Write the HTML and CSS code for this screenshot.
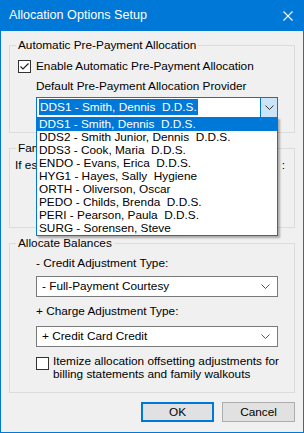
FILE: index.html
```html
<!DOCTYPE html>
<html>
<head>
<meta charset="utf-8">
<link rel="stylesheet" href="styles.css">
</head>
<body>
<div class="window">
  <div class="titlebar">
    <span class="title">Allocation Options Setup</span>
    <svg class="close" width="10" height="10" viewBox="0 0 10 10"><path d="M0.5 0.5 L9.5 9.5 M9.5 0.5 L0.5 9.5" stroke="#fff" stroke-width="1.1" fill="none"/></svg>
  </div>
  <div class="client">
    <fieldset class="group g1">
      <legend>Automatic Pre-Payment Allocation</legend>
      <div class="check-row first">
        <span class="checkbox"><svg width="11" height="11" viewBox="0 0 11 11"><path d="M1.5 5.5 L4 8 L9.5 2.5" stroke="#222" stroke-width="1.2" fill="none"/></svg></span>
        <span class="check-text">Enable Automatic Pre-Payment Allocation</span>
      </div>
      <div class="field-label lbl1">Default Pre-Payment Allocation Provider</div>
      <div class="combo focused c1">
        <span class="combo-text"><span class="sel">DDS1 - Smith, Dennis  D.D.S.</span></span>
        <span class="combo-btn"><svg width="9" height="5" viewBox="0 0 9 5"><path d="M0.5 0.5 L4.5 4.5 L8.5 0.5" stroke="#333" fill="none"/></svg></span>
      </div>
    </fieldset>

    <fieldset class="group g2">
      <legend>Family</legend>
      <div class="split-row">
        <span>If estimated</span>
        <span>:</span>
      </div>
    </fieldset>

    <fieldset class="group g3">
      <legend>Allocate Balances</legend>
      <div class="field-label lbl2">- Credit Adjustment Type:</div>
      <div class="combo c2">
        <span class="combo-text">- Full-Payment Courtesy</span>
        <span class="combo-arrow"><svg width="9" height="5" viewBox="0 0 9 5"><path d="M0.5 0.5 L4.5 4.5 L8.5 0.5" stroke="#555" fill="none"/></svg></span>
      </div>
      <div class="field-label lbl3">+ Charge Adjustment Type:</div>
      <div class="combo c3">
        <span class="combo-text">+ Credit Card Credit</span>
        <span class="combo-arrow"><svg width="9" height="5" viewBox="0 0 9 5"><path d="M0.5 0.5 L4.5 4.5 L8.5 0.5" stroke="#555" fill="none"/></svg></span>
      </div>
      <div class="check-row itemize">
        <span class="checkbox"></span>
        <span class="check-text">Itemize allocation offsetting adjustments for<br>billing statements and family walkouts</span>
      </div>
    </fieldset>

    <div class="buttons">
      <div class="btn default">OK</div>
      <div class="btn">Cancel</div>
    </div>
  </div>

  <ul class="dropdown">
    <li class="hl">DDS1 - Smith, Dennis  D.D.S.</li>
    <li>DDS2 - Smith Junior, Dennis  D.D.S.</li>
    <li>DDS3 - Cook, Maria  D.D.S.</li>
    <li>ENDO - Evans, Erica  D.D.S.</li>
    <li>HYG1 - Hayes, Sally  Hygiene</li>
    <li>ORTH - Oliverson, Oscar</li>
    <li>PEDO - Childs, Brenda  D.D.S.</li>
    <li>PERI - Pearson, Paula  D.D.S.</li>
    <li>SURG - Sorensen, Steve</li>
  </ul>
</div>
</body>
</html>
```

FILE: styles.css
```css
* { box-sizing: border-box; }
html, body { margin: 0; padding: 0; }
body {
  font-family: "Liberation Sans", Arial, sans-serif;
  font-size: 11.8px;
  line-height: 13px;
  color: #000;
  background: #f0f0f0;
}
.window {
  position: relative;
  width: 304px;
  height: 433px;
  border: 1px solid #0078d7;
  border-top: 0;
  background: #f0f0f0;
  display: flex;
  flex-direction: column;
}
.titlebar {
  height: 31px;
  margin: 0 -1px;
  background: #0078d7;
  display: flex;
  align-items: center;
  justify-content: space-between;
  padding: 0 11px 0 9px;
  color: #fff;
}
.title {
  font-size: 12.6px;
  line-height: 16px;
  padding-bottom: 1px;
}
.close { display: block; }
.client {
  flex: 1;
  padding: 8px 8px 0 8px;
  display: flex;
  flex-direction: column;
}
.group {
  margin: 0;
  padding: 0 0 0 6px;
  border: 1px solid #dcdcdc;
  min-width: 0;
}
.group legend {
  padding: 0 2px;
  line-height: 13px;
}
.g1 { height: 94px; }
.g2 { height: 86px; margin-top: 9px; }
.g3 { height: 156px; margin-top: 9px; }

.check-row {
  display: flex;
  align-items: flex-start;
}
.check-row.first { margin-top: 8px; margin-left: 2px; }
.checkbox {
  width: 13px;
  height: 13px;
  border: 1px solid #333;
  background: #fff;
  display: flex;
  align-items: center;
  justify-content: center;
  flex: none;
}
.check-text { margin-left: 5px; }

.field-label { margin-left: 20px; }
.lbl1 { margin-top: 7px; }
.lbl2 { margin-top: 7px; }
.lbl3 { margin-top: 8px; }

.combo {
  margin-left: 20px;
  width: 242px;
  height: 21px;
  border: 1px solid #7a7a7a;
  background: #fff;
  display: flex;
  align-items: center;
  white-space: pre;
}
.combo-text { flex: 1; padding-left: 5px; }
.c1 { margin-top: 4px; border-color: #0078d7; }
.c1 .combo-text { padding-left: 2px; }
.c2 { margin-top: 6px; }
.c3 { margin-top: 8px; }
.sel {
  background: #0078d7;
  color: #fff;
  padding: 1px 1px;
}
.combo-btn {
  width: 17px;
  height: 19px;
  background: #cce4f7;
  border-left: 1px solid #0078d7;
  display: flex;
  align-items: center;
  justify-content: center;
}
.combo-btn svg, .combo-arrow svg { display: block; }
.combo-arrow {
  width: 20px;
  display: flex;
  justify-content: center;
  padding-right: 3px;
}

.split-row {
  margin-top: 4px;
  margin-left: -1px;
  display: flex;
  justify-content: space-between;
  padding-right: 9px;
  white-space: nowrap;
}

.itemize { margin-left: 20px; margin-top: 8px; }
.itemize .checkbox { margin-top: 2px; }
.itemize .check-text { margin-left: 4px; }

.buttons {
  margin-top: 9px;
  display: flex;
  justify-content: flex-end;
  gap: 8px;
}
.btn {
  width: 73px;
  height: 20px;
  border: 1px solid #adadad;
  background: #e1e1e1;
  display: flex;
  align-items: center;
  justify-content: center;
}
.btn.default { border: 2px solid #0078d7; }

.dropdown {
  position: absolute;
  left: 35px;
  top: 117px;
  width: 242px;
  margin: 0;
  padding: 0;
  list-style: none;
  background: #fff;
  border: 1px solid #0078d7;
  box-shadow: 2px 2px 2px rgba(0, 0, 0, 0.3);
}
.dropdown li {
  height: 13px;
  line-height: 13px;
  padding-left: 2px;
  white-space: pre;
}
.dropdown li.hl { background: #0078d7; color: #fff; }
```
